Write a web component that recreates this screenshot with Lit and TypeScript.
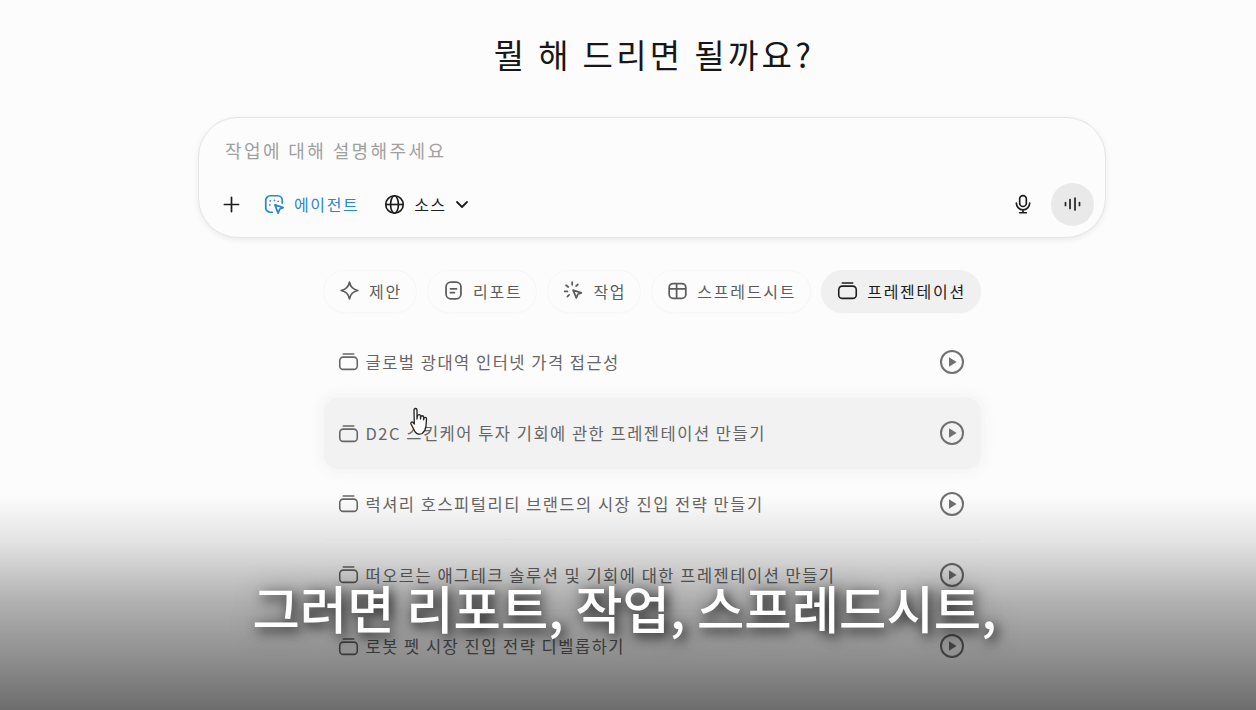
import { LitElement, html, css } from "lit";
import { customElement } from "lit/decorators.js";

const slides = html`<svg class="ic" viewBox="0 0 24 24" fill="none" stroke="currentColor" stroke-width="1.8" stroke-linecap="round"><rect x="2" y="7" width="20" height="14" rx="4"/><path d="M6 3.500h12"/></svg>`;
const play = html`<svg class="play" viewBox="0 0 26 26"><circle cx="13" cy="13" r="11" fill="none" stroke="currentColor" stroke-width="2"/><path d="M10 8.200v9.600l7.600-4.800z" fill="currentColor"/></svg>`;
const spark = html`<svg class="ic" viewBox="0 0 24 24" fill="none" stroke="currentColor" stroke-width="2" stroke-linejoin="round"><path d="M12 2.500c1 5.200 4.200 8.400 9.500 9.500-5.300 1.100-8.500 4.300-9.500 9.500-1-5.200-4.200-8.400-9.500-9.500 5.300-1.100 8.500-4.300 9.500-9.500z"/></svg>`;
const report = html`<svg class="ic" viewBox="0 0 24 24" fill="none" stroke="currentColor" stroke-width="2" stroke-linecap="round"><rect x="3.500" y="2.500" width="17" height="19" rx="5.500"/><path d="M8.500 10h7M8.500 14.500h4.500"/></svg>`;
const task = html`<svg class="ic" viewBox="0 0 24 24" fill="none" stroke="currentColor" stroke-width="2" stroke-linecap="round" stroke-linejoin="round"><path d="M11.500 11.500l9.500 3.200-4 1.600-1.800 4.200z"/><path d="M10.500 2.500v3M3.500 6l2.500 2M2 13h3M5 19l2-2M17 5l-2 2"/></svg>`;
const table = html`<svg class="ic" viewBox="0 0 24 24" fill="none" stroke="currentColor" stroke-width="2"><rect x="2.500" y="4" width="19" height="17" rx="4.500"/><path d="M2.500 10h19M11 4v17"/></svg>`;

const chips = [
  { t: "제안", i: spark },
  { t: "리포트", i: report },
  { t: "작업", i: task },
  { t: "스프레드시트", i: table },
  { t: "프레젠테이션", i: slides, on: true },
];
const rows = [
  "글로벌 광대역 인터넷 가격 접근성",
  "D2C 스킨케어 투자 기회에 관한 프레젠테이션 만들기",
  "럭셔리 호스피털리티 브랜드의 시장 진입 전략 만들기",
  "떠오르는 애그테크 솔루션 및 기회에 대한 프레젠테이션 만들기",
  "로봇 펫 시장 진입 전략 디벨롭하기",
];

@customElement("app-root")
export class AppRoot extends LitElement {
  static styles = css`
    :host { display: block; position: relative; width: 1256px; height: 710px; overflow: hidden; background: #fcfcfc; font-family: "Noto Sans CJK KR", "Noto Sans", sans-serif; color: #1d1d1d; }
    .page { display: flex; flex-direction: column; align-items: center; padding: 29px 0 0 48px; }
    h1 { margin: 0; padding-left: 4px; font-size: 33px; font-weight: 400; line-height: 50px; letter-spacing: 3.3px; color: #171717; }
    .composer { box-sizing: border-box; width: 908px; height: 121px; margin-top: 38px; border-radius: 40px; background: #fcfcfc; border: 1px solid #e4e4e4; box-shadow: 0 2px 6px rgba(0,0,0,.07); padding: 19px 11px 11px 24px; display: flex; flex-direction: column; justify-content: space-between; }
    .ph { margin-left: 2px; font-size: 18px; line-height: 26px; color: #a0a0a0; letter-spacing: 2.400px; }
    .tools { display: flex; align-items: center; height: 44px; }
    .tools svg { flex: none; }
    .agent { display: flex; align-items: center; gap: 9px; margin-left: 23px; color: #2c86cc; font-size: 16px; letter-spacing: 1.600px; }
    .src { display: flex; align-items: center; gap: 9px; margin-left: 25px; font-size: 16px; letter-spacing: 1.300px; color: #222; }
    .mic { margin-left: auto; margin-right: 18px; }
    .wave { width: 43px; height: 43px; border-radius: 50%; background: #e9e9e9; display: flex; align-items: center; justify-content: center; }
    .chips { display: flex; gap: 10px; margin-top: 32px; }
    .chip { display: flex; align-items: center; gap: 9px; height: 43px; box-sizing: border-box; padding: 0 14px 2px 15px; border-radius: 22px; border: 1px solid #f6f6f6; font-size: 16px; letter-spacing: 1.750px; color: #5d5d5d; box-shadow: 0 1px 3px rgba(0,0,0,.015); }
    .chip.on { background: #f0f0f0; border-color: #f0f0f0; color: #1d1d1d; }
    .chip .ic { width: 21px; height: 21px; }
    .list { width: 657px; margin-top: 14px; display: flex; flex-direction: column; }
    .row { display: flex; align-items: center; height: 71px; box-sizing: border-box; padding: 0 16px 1px 14px; gap: 7px; color: #666; font-size: 16.500px; letter-spacing: 1.500px; border-bottom: 1px solid #f8f8f8; }
    .row:last-child { border-bottom: 0; }
    .row.hover { background: #f2f2f2; border-radius: 14px; box-shadow: 0 0 14px 3px #f3f3f3; border-bottom: 0; }
    .row .ic { width: 21px; height: 21px; flex: none; }
    .row span { flex: 1; }
    .play { width: 26px; height: 26px; color: #707070; flex: none; }
    .hand { position: absolute; left: 409px; top: 407px; width: 20px; height: 30px; }
    .shade { position: absolute; left: 0; right: 0; bottom: 0; height: 215px; background: linear-gradient(to bottom, rgba(0,0,0,0) 0%, rgba(0,0,0,.1) 22%, rgba(0,0,0,.3) 50%, rgba(0,0,0,.43) 75%, rgba(0,0,0,.57) 100%); pointer-events: none; }
    .cap { position: absolute; left: 0; right: 0; top: 569px; text-align: center; font-size: 51.500px; line-height: 76px; font-weight: 500; letter-spacing: 0; color: #fff; text-shadow: 3px 4px 12px rgba(0,0,0,.8), 0 0 24px rgba(0,0,0,.5); white-space: nowrap; padding-right: 7px; box-sizing: border-box; }
  `;

  render() {
    return html`
      <div class="page">
        <h1>뭘 해 드리면 될까요?</h1>
        <div class="composer">
          <div class="ph">작업에 대해 설명해주세요</div>
          <div class="tools">
            <svg width="17" height="17" viewBox="0 0 18 18" stroke="#1d1d1d" stroke-width="1.800" stroke-linecap="round"><path d="M9 1.500v15M1.500 9h15"/></svg>
            <div class="agent">
              <svg width="22" height="22" viewBox="0 0 24 24" fill="none" stroke="#2c86cc" stroke-width="1.900" stroke-linecap="round" stroke-linejoin="round"><path d="M10 21H8a5 5 0 0 1-5-5V8a5 5 0 0 1 5-5h8a5 5 0 0 1 5 5v3"/><path d="M13 13l9 3-3.700 1.500L16.500 22z"/><path d="M8 8.500h.01M12.500 8h.01M16.500 9h.01M7.500 13h.01"/></svg>
              에이전트
            </div>
            <div class="src">
              <svg width="21" height="21" viewBox="0 0 24 24" fill="none" stroke="#1d1d1d" stroke-width="1.900"><circle cx="12" cy="12" r="10"/><ellipse cx="12" cy="12" rx="4.500" ry="10"/><path d="M2 12h20"/></svg>
              소스
              <svg width="14" height="9" viewBox="0 0 14 9" fill="none" stroke="#1d1d1d" stroke-width="1.800" stroke-linecap="round" stroke-linejoin="round"><path d="M2 2l5 5 5-5"/></svg>
            </div>
            <svg class="mic" width="20" height="22" viewBox="0 0 24 24" fill="none" stroke="#1d1d1d" stroke-width="2" stroke-linecap="round"><rect x="8" y="2" width="8" height="13" rx="4"/><path d="M4 11a8 8 0 0 0 16 0M12 19v3M8 22.500h8"/></svg>
            <div class="wave">
              <svg width="17" height="14" viewBox="0 0 17 14" stroke="#222" stroke-width="1.700" stroke-linecap="round"><path d="M1.500 5.500v3M6 2.500v9M11 1v12M15.500 5.500v3"/></svg>
            </div>
          </div>
        </div>
        <div class="chips">
          ${chips.map((c) => html`<div class="chip ${c.on ? "on" : ""}">${c.i}${c.t}</div>`)}
        </div>
        <div class="list">
          ${rows.map((r, i) => html`<div class="row ${i === 1 ? "hover" : ""}">${slides}<span>${r}</span>${play}</div>`)}
        </div>
      </div>
      <svg class="hand" viewBox="0 0 20 30" fill="#fff" stroke="#222" stroke-width="1.300" stroke-linejoin="round"><path d="M5 3a1.500 1.500 0 0 1 3 0v9l.5-3a1.500 1.500 0 0 1 3 .3l0 2.700.3-2a1.400 1.400 0 0 1 2.800.3l0 2.500.3-1.300a1.300 1.300 0 0 1 2.600.4l-.5 7c-.3 4-2 6-3.800 7.600-2.500 1-5.500.5-7-1.500L2 17c-.8-1.500.8-2.800 2-1.500l1.300 1.500z"/></svg>
      <div class="shade"></div>
      <div class="cap">그러면 리포트, 작업, 스프레드시트,</div>
    `;
  }
}
